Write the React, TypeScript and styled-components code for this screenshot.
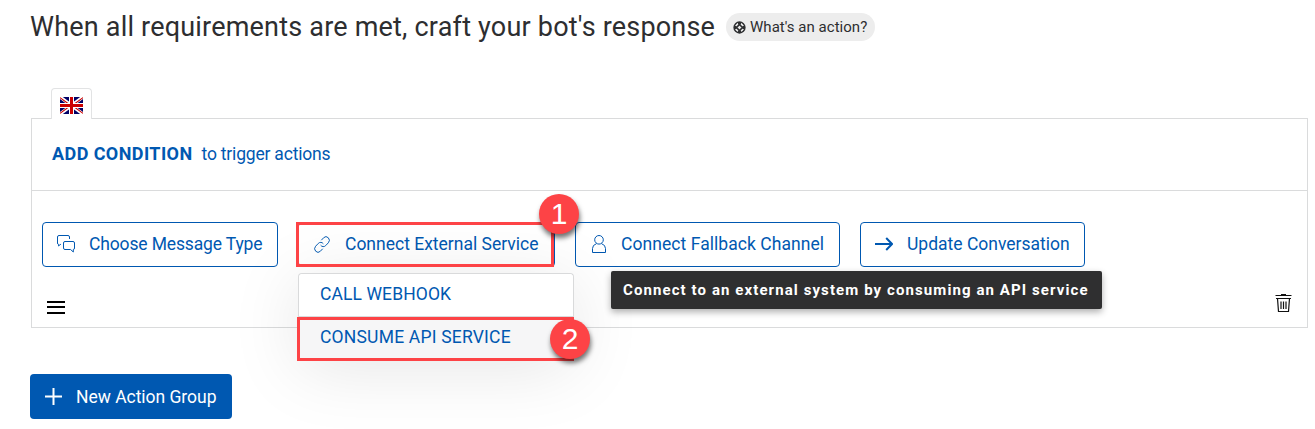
import React from 'react';
import styled, { createGlobalStyle } from 'styled-components';

const BLUE = '#0058b1';
const RED = '#fd4346';
const LINE = '#dadbdc';

const GlobalStyle = createGlobalStyle`
  * { box-sizing: border-box; }
  body { margin: 0; background: #fff; color: #2d2e30; font-family: Roboto, "Liberation Sans", sans-serif; overflow: hidden; }
  button { font-family: inherit; margin: 0; cursor: pointer; }
  svg { display: block; flex: none; }
`;

const Page = styled.main`
  width: 1315px;
  height: 429px;
  padding: 7px 7px 0 30px;
`;

const Header = styled.header`
  display: flex;
  align-items: center;
  height: 40px;
`;

const Title = styled.h1`
  margin: 0;
  width: 696px;
  font-size: 27px;
  font-weight: 400;
  line-height: 40px;
  white-space: nowrap;
`;

const HelpPill = styled.a`
  display: flex;
  align-items: center;
  gap: 4px;
  width: 149px;
  height: 28px;
  padding-left: 7px;
  border-radius: 14px;
  background: #ededed;
  font-size: 15px;
  white-space: nowrap;
`;

const Text = styled.span<{ $spacing?: number }>`
  letter-spacing: ${(p) => p.$spacing ?? 0}px;
  white-space: nowrap;
`;

const Tabs = styled.nav`
  display: flex;
  margin: 41px 0 -1px 21px;
`;

const LanguageTab = styled.div`
  position: relative;
  z-index: 1;
  display: flex;
  justify-content: center;
  width: 41px;
  height: 31px;
  padding-top: 8px;
  border: 1px solid #e2e3e4;
  border-bottom: 0;
  border-radius: 4px 4px 0 0;
  background: #fff;
`;

const Panel = styled.section`
  width: 1277px;
  height: 210px;
  margin-left: 1px;
  border: 1px solid ${LINE};
`;

const ConditionRow = styled.div`
  display: flex;
  align-items: center;
  gap: 9px;
  height: 72px;
  padding: 0 0 2px 20px;
  border-bottom: 1px solid ${LINE};
  color: ${BLUE};
  font-size: 17.5px;

  strong { font-weight: 700; font-size: 18px; }
`;

const ButtonRow = styled.div`
  display: flex;
  gap: 20px;
  padding: 31px 0 0 10px;
`;

const ActionSlot = styled.div`
  position: relative;
`;

const ActionButton = styled.button<{ $width: number; $gap: number; $inset?: number }>`
  display: flex;
  align-items: center;
  gap: ${(p) => p.$gap}px;
  width: ${(p) => p.$width}px;
  height: 45px;
  padding: 0 0 1px ${(p) => p.$inset ?? 14}px;
  border: 1px solid ${BLUE};
  border-radius: 4px;
  background: transparent;
  color: ${BLUE};
  font-size: 17.5px;
`;

const ButtonHighlight = styled.div`
  position: absolute;
  z-index: 3;
  inset: 0 1px 0 -2px;
  border: 3px solid ${RED};
`;

const Menu = styled.div`
  position: absolute;
  z-index: 2;
  top: 51px;
  left: 0;
  width: 276px;
  border: 1px solid #d9dadb;
  border-bottom: 0;
  border-radius: 4px 4px 0 0;
  background: #fff;
  box-shadow: 0 8px 70px rgba(0, 0, 0, 0.1);
`;

const MenuItem = styled.div<{ $active?: boolean }>`
  display: flex;
  align-items: center;
  height: ${(p) => (p.$active ? 44 : 43)}px;
  padding: 0 0 ${(p) => (p.$active ? 5 : 2)}px 21px;
  background: ${(p) => (p.$active ? '#f6f6f7' : '#fff')};
  border-bottom: ${(p) => (p.$active ? '0' : `1px solid ${LINE}`)};
  border-radius: ${(p) => (p.$active ? '0' : '4px 4px 0 0')};
  color: ${BLUE};
  font-size: 17.5px;
`;

const ItemHighlight = styled.div`
  position: absolute;
  inset: 43px -1px 0 -2px;
  border: 3px solid ${RED};
  border-right: 0;
`;

const StepBadge = styled.div<{ $x: number; $y: number }>`
  position: absolute;
  z-index: 4;
  left: ${(p) => p.$x}px;
  top: ${(p) => p.$y}px;
  width: 40px;
  height: 40px;
  border-radius: 50%;
  background: ${RED};
  color: #fff;
  font: 30px/40px "Liberation Sans", sans-serif;
  text-align: center;
  box-shadow: 1px 4px 5px rgba(0, 0, 0, 0.55);
`;

const Tooltip = styled.div`
  position: absolute;
  z-index: 5;
  top: 49px;
  left: 36px;
  display: flex;
  align-items: center;
  width: 491px;
  height: 38px;
  padding-left: 12px;
  border-radius: 2px;
  background: #2f2f30;
  color: #fff;
  font-size: 15px;
  font-weight: 700;
  box-shadow: 0 3px 7px rgba(0, 0, 0, 0.32);
`;

const PanelFooter = styled.div`
  display: flex;
  justify-content: space-between;
  align-items: flex-end;
  padding: 27px 15px 0 15px;
`;

const NewGroupButton = styled.button`
  display: flex;
  align-items: center;
  gap: 14px;
  width: 202px;
  height: 45px;
  margin-top: 46px;
  padding: 0 0 0 15px;
  border: 0;
  border-radius: 4px;
  background: ${BLUE};
  color: #fff;
  font-size: 17.5px;
`;

const HelpIcon = () => (
  <svg width="13" height="13" viewBox="0 0 13 13" fill="none" stroke="#2d2e30">
    <circle cx="6.5" cy="6.5" r="5.4" strokeWidth="1.5" />
    <path d="M6.5 3.5 9.5 6.5 6.5 9.5 3.5 6.5Z" strokeWidth="1.6" />
    <path d="M6.5 1v2.5M6.5 9.5V12M1 6.5h2.5M9.5 6.5H12" strokeWidth="3" />
  </svg>
);

const FlagIcon = () => (
  <svg width="23" height="17" viewBox="0 0 23 17">
    <path fill="#006" d="M0 0h23v17H0z" />
    <path stroke="#fff" strokeWidth="3.4" d="M0 0l23 17M23 0L0 17" />
    <path stroke="#c00" strokeWidth="1.1" d="M0 .6l9 6.6M23 .6l-9 6.6M0 16.4l9-6.6M23 16.4l-9-6.6" />
    <path stroke="#fff" strokeWidth="5" d="M11.5 0v17M0 8.5h23" />
    <path stroke="#c00" strokeWidth="3" d="M11.5 0v17M0 8.5h23" />
  </svg>
);

const ChatIcon = () => (
  <svg width="18" height="18" viewBox="0 0 18 18" fill="none" stroke={BLUE}>
    <path d="M4 9.5H3.2L1.6 11V9.5Q.5 9.3.5 8V2Q.5.5 2 .5H11Q12.5.5 12.5 2V4" />
    <path d="M8 6.5H16Q17.5 6.5 17.5 8V13Q17.5 14.5 16.3 14.5V17L13.6 14.5H8Q6.5 14.5 6.5 13V8Q6.5 6.5 8 6.5Z" />
  </svg>
);

const LinkIcon = () => (
  <svg width="16" height="17" viewBox="0 0 24 24" preserveAspectRatio="none" fill="none" stroke={BLUE} strokeWidth="1.4">
    <path d="M10 13a5 5 0 0 0 7.54.54l4-4a5 5 0 0 0-7.07-7.07l-3.5 3.5" />
    <path d="M14 11a5 5 0 0 0-7.54-.54l-4 4a5 5 0 0 0 7.07 7.07l3.5-3.5" />
  </svg>
);

const PersonIcon = () => (
  <svg width="14" height="18" viewBox="0 0 14 18" fill="none" stroke={BLUE}>
    <circle cx="7" cy="4.8" r="4.3" />
    <path d="M4.4 8.7Q.5 10 .5 13.5V17.5H13.5V13.5Q13.5 10 9.6 8.7" />
  </svg>
);

const ArrowIcon = () => (
  <svg width="18" height="14" viewBox="0 0 18 14" fill="none" stroke={BLUE} strokeWidth="2">
    <path d="M0 7H16.5M11.2 1 17 7 11.2 13" />
  </svg>
);

const BarsIcon = () => (
  <svg width="18" height="14" viewBox="0 0 18 14" fill="#000" overflow="visible">
    <path d="M0 3h18v2H0zM0 8h18v2H0zM0 14h18v2H0z" />
  </svg>
);

const TrashIcon = () => (
  <svg width="17" height="18" viewBox="0 0 17 18" fill="none" stroke="#111">
    <path d="M6 .5h5M.5 1.5h16" strokeWidth="1" />
    <path d="M1 4.5h15M2.5 4.5l1 13h10l1-13M6 7.5v7.5M8.5 7.5v7.5M11 7.5v7.5" strokeWidth="1.2" />
  </svg>
);

const PlusIcon = () => (
  <svg width="17" height="17" viewBox="0 0 17 17" stroke="#fff" strokeWidth="2">
    <path d="M8.5 0v17M0 8.5h17" />
  </svg>
);

export default function App() {
  return (
    <Page>
      <GlobalStyle />
      <Header>
        <Title><Text $spacing={0.2}>When all requirements are met, craft your bot's response</Text></Title>
        <HelpPill><HelpIcon /><Text $spacing={0.03}>What's an action?</Text></HelpPill>
      </Header>
      <Tabs><LanguageTab><FlagIcon /></LanguageTab></Tabs>
      <Panel>
        <ConditionRow>
          <strong><Text $spacing={0.42}>ADD CONDITION</Text></strong>
          <Text $spacing={-0.2}>to trigger actions</Text>
        </ConditionRow>
        <ButtonRow>
          <ActionButton $width={236} $gap={14}><ChatIcon /><Text $spacing={-0.14}>Choose Message Type</Text></ActionButton>
          <ActionSlot>
            <ActionButton $width={257} $gap={15} $inset={15}><LinkIcon /><Text>Connect External Service</Text></ActionButton>
            <ButtonHighlight />
            <Menu>
              <MenuItem><Text $spacing={0.1}>CALL WEBHOOK</Text></MenuItem>
              <MenuItem $active><Text $spacing={0.2}>CONSUME API SERVICE</Text></MenuItem>
              <ItemHighlight />
            </Menu>
            <StepBadge $x={241} $y={-28}>1</StepBadge>
            <StepBadge $x={252} $y={97}>2</StepBadge>
          </ActionSlot>
          <ActionSlot>
            <ActionButton $width={265} $gap={15} $inset={16}><PersonIcon /><Text $spacing={0.06}>Connect Fallback Channel</Text></ActionButton>
            <Tooltip role="tooltip"><Text $spacing={1.09}>Connect to an external system by consuming an API service</Text></Tooltip>
          </ActionSlot>
          <ActionButton $width={225} $gap={14}><ArrowIcon /><Text>Update Conversation</Text></ActionButton>
        </ButtonRow>
        <PanelFooter><BarsIcon /><TrashIcon /></PanelFooter>
      </Panel>
      <NewGroupButton><PlusIcon /><Text $spacing={-0.03}>New Action Group</Text></NewGroupButton>
    </Page>
  );
}
